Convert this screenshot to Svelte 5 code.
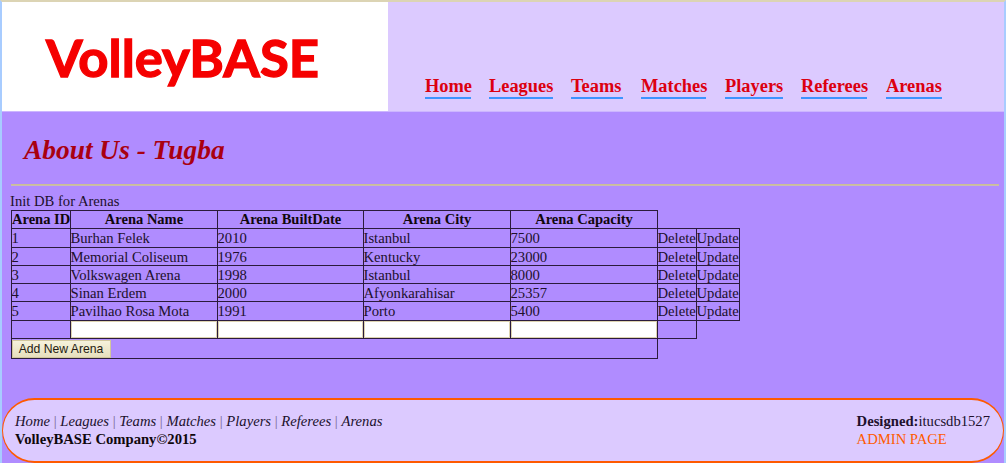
<script>
  const links = [
    { name: 'Home', width: 46, gap: 18 },
    { name: 'Leagues', width: 64, gap: 18 },
    { name: 'Teams', width: 52, gap: 18 },
    { name: 'Matches', width: 65, gap: 19 },
    { name: 'Players', width: 58, gap: 18 },
    { name: 'Referees', width: 66, gap: 19 },
    { name: 'Arenas', width: 56, gap: 0 }
  ];
  const footerLinks = links.map((l) => l.name);
  const headings = ['Arena ID', 'Arena Name', 'Arena BuiltDate', 'Arena City', 'Arena Capacity'];
  const columns = [59, 147, 146, 147, 147, 39, 43];
  const arenas = [
    { height: 19, cells: [1, 'Burhan Felek', 2010, 'Istanbul', 7500] },
    { height: 18, cells: [2, 'Memorial Coliseum', 1976, 'Kentucky', 23000] },
    { height: 18, cells: [3, 'Volkswagen Arena', 1998, 'Istanbul', 8000] },
    { height: 18, cells: [4, 'Sinan Erdem', 2000, 'Afyonkarahisar', 25357] },
    { height: 19, cells: [5, 'Pavilhao Rosa Mota', 1991, 'Porto', 5400] }
  ];
</script>

<div class="page">
  <header>
    <div class="logo">
      <svg width="386" height="109" viewBox="0 0 386 109" role="img" aria-label="VolleyBASE">
        <text x="44" y="75" textLength="273" lengthAdjust="spacingAndGlyphs">VolleyBASE</text>
      </svg>
    </div>
    <nav>
      {#each links as link}
        <a href="#top" style="width: {link.width}px; margin-right: {link.gap}px">{link.name}</a>
      {/each}
    </nav>
  </header>

  <main>
    <h1>About Us - Tugba</h1>
    <div class="rule"></div>
    <p>Init DB for Arenas</p>
    <table>
      <colgroup>
        {#each columns as width}<col style="width: {width}px" />{/each}
      </colgroup>
      <tbody>
        <tr style="height: 18px">
          {#each headings as heading}<th>{heading}</th>{/each}
        </tr>
        {#each arenas as arena}
          <tr style="height: {arena.height}px">
            {#each arena.cells as cell}<td><div>{cell}</div></td>{/each}
            <td><div>Delete</div></td>
            <td><div>Update</div></td>
          </tr>
        {/each}
        <tr style="height: 18px">
          <td></td>
          {#each [0, 1, 2, 3] as field}
            <td><input type="text" aria-label={headings[field + 1]} /></td>
          {/each}
          <td></td>
        </tr>
        <tr style="height: 20px">
          <td colspan="5"><button>Add New Arena</button></td>
        </tr>
      </tbody>
    </table>
  </main>

  <footer>
    <div class="left">
      <div class="links">
        {#each footerLinks as name, i}{#if i > 0}<span>{' | '}</span>{/if}<i>{name}</i>{/each}
      </div>
      <b>VolleyBASE Company©2015</b>
    </div>
    <div class="right">
      <div><b>Designed:</b>itucsdb1527</div>
      <a href="#admin">ADMIN PAGE</a>
    </div>
  </footer>
</div>

<style>
  :global(body) {
    margin: 0;
    overflow: hidden;
  }
  .page {
    box-sizing: border-box;
    width: 1006px;
    height: 463px;
    display: flex;
    flex-direction: column;
    overflow: hidden;
    border: 2px solid #a8ccff;
    border-top-color: #dcd4b4;
    border-bottom: 0;
    background: #b08cff;
    color: #20102c;
    font: 14.65px/18px 'Liberation Serif', 'Times New Roman', serif;
  }
  header {
    display: flex;
    flex: none;
    height: 110px;
    box-sizing: border-box;
    border-bottom: 1px solid #ccb6ff;
    background: #dccaff;
  }
  .logo {
    width: 386px;
    height: 109px;
    background: #fff;
  }
  .logo svg {
    display: block;
  }
  .logo text {
    font: bold 51px Lato, sans-serif;
    fill: #f50000;
    stroke: #f50000;
    stroke-width: 1.3px;
  }
  nav {
    display: flex;
    align-items: flex-start;
    padding: 73px 0 0 37px;
  }
  nav a {
    flex: none;
    height: 22px;
    border-bottom: 2px solid #3c94ff;
    color: #dc0010;
    font-size: 18.4px;
    font-weight: bold;
    line-height: 22px;
    text-decoration: none;
    white-space: nowrap;
  }
  main {
    flex: none;
    height: 286px;
    padding: 0 5px 0 9px;
    box-sizing: border-box;
  }
  h1 {
    margin: 0;
    padding: 22px 0 0 13px;
    height: 72px;
    box-sizing: border-box;
    color: #a90010;
    font-size: 27.4px;
    font-style: italic;
    line-height: 32px;
  }
  .rule {
    height: 2px;
    background: linear-gradient(#cbbf94 50%, #c9bcb2 50%);
  }
  p {
    margin: 6px 0 0 -1px;
  }
  table {
    width: 729px;
    table-layout: fixed;
    border-collapse: collapse;
  }
  th,
  td {
    padding: 0;
    border: 1px solid #2b1b3b;
    line-height: 16px;
    white-space: nowrap;
    vertical-align: middle;
  }
  th {
    color: #10080c;
    font-size: 14.5px;
    line-height: 15px;
  }
  td div {
    height: 16px;
    margin-left: -0.5px;
  }
  input {
    display: block;
    box-sizing: border-box;
    width: 100%;
    height: 17px;
    padding: 0;
    border: 1px solid #ddd3b0;
    border-radius: 0;
    background: #fff;
  }
  button {
    display: block;
    box-sizing: border-box;
    width: 99px;
    height: 18px;
    padding: 0 1px 0 0;
    border: 1px solid #d2c79c;
    border-radius: 0;
    background: linear-gradient(#f6f2dc, #e7dfbd);
    color: #241a10;
    font: 12.2px/16px 'Liberation Sans', Arial, sans-serif;
    white-space: nowrap;
  }
  footer {
    display: flex;
    flex: none;
    justify-content: space-between;
    box-sizing: border-box;
    height: 65px;
    padding: 13px 13px 0 12px;
    border: 2px solid #ff5a00;
    border-right-width: 1px;
    border-left-width: 1px;
    border-radius: 33px;
    background: #dccaff;
    line-height: 17.5px;
  }
  .links span {
    color: #75658a;
    white-space: pre;
  }
  .left,
  .right {
    white-space: nowrap;
  }
  .left > b {
    color: #10080c;
  }
  .right a {
    color: #ff5a00;
    text-decoration: none;
  }
</style>
